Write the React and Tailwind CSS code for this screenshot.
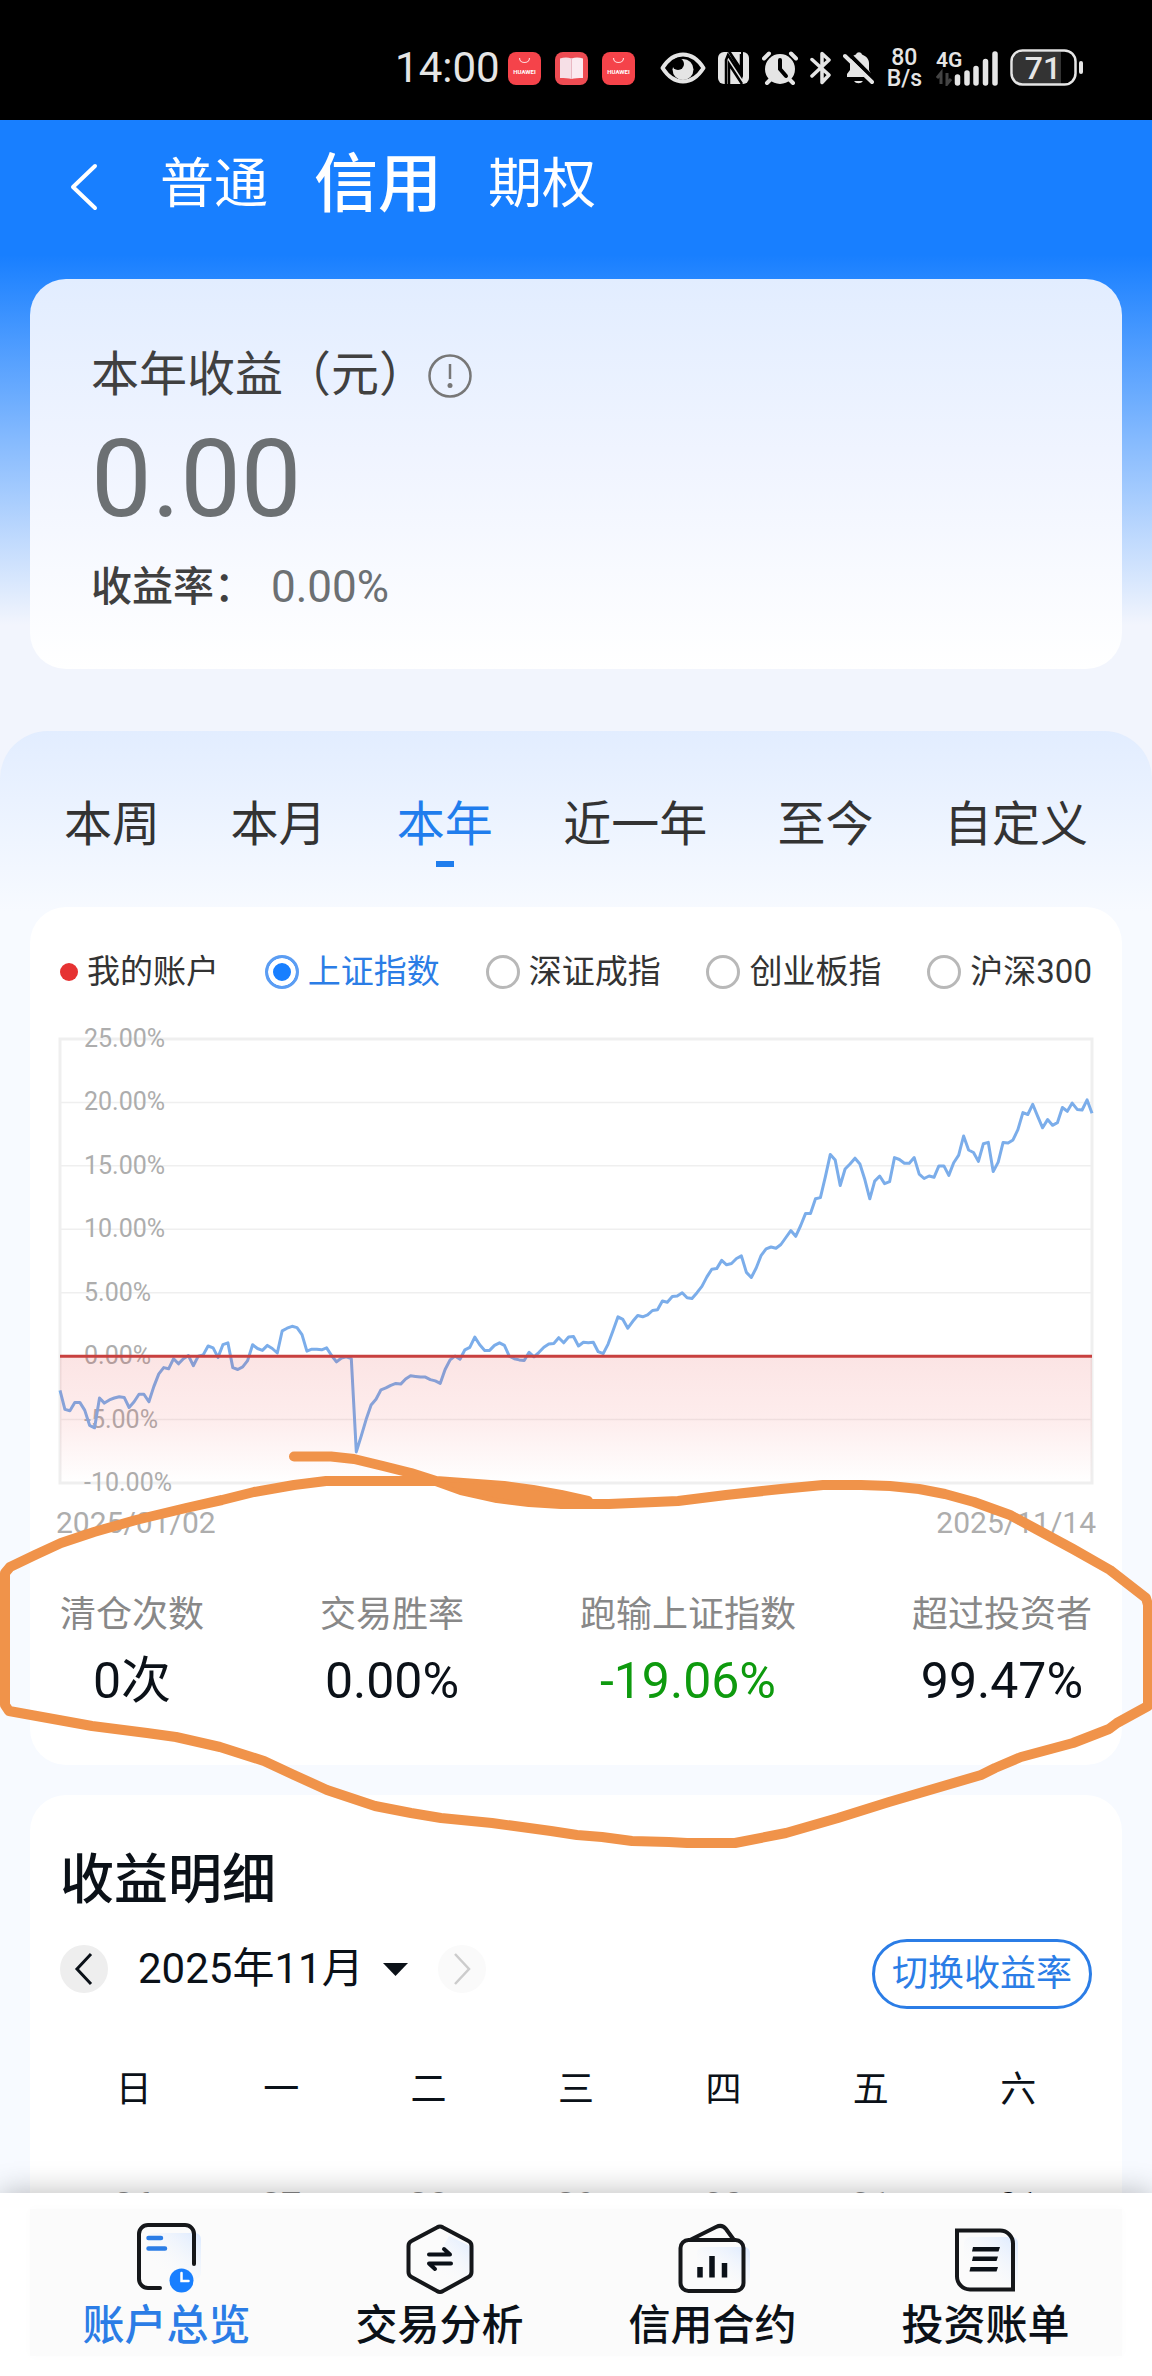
import React, { useState } from "react";

const periods = ["本周", "本月", "本年", "近一年", "至今", "自定义"];
const indexes = ["上证指数", "深证成指", "创业板指", "沪深300"];
const weekdays = ["日", "一", "二", "三", "四", "五", "六"];
const firstWeek = ["26", "27", "28", "29", "30", "31", "01"];

const stats = [
  { label: "清仓次数", value: "0次" },
  { label: "交易胜率", value: "0.00%" },
  { label: "跑输上证指数", value: "-19.06%", down: true },
  { label: "超过投资者", value: "99.47%" },
];

// daily change of the index since the first trading day, in percent
const indexSeries = [
  -2.7, -4.2, -4.3, -3.65, -3.65, -4.25, -5.45, -5.65, -3.3, -3.7, -3.45, -3.3, -3.2, -3.25, -4.05,
  -3.6, -3, -3, -3.6, -2.4, -1.4, -0.9, -1, -0.2, -0.6, -0.2, 0.05, -0.75, 0, 0.1, 0.8, 0.65, -0.1,
  0.9, 1.05, -0.9, -1.05, -0.85, -0.35, 0.9, 0.6, 0.45, 0.85, 0.6, 0.25, 2, 2.2, 2.35, 2.25, 1.7,
  0.4, 0.55, 0.55, 0.5, 0.65, 0.05, -0.45, -0.15, -0.05, -0.2, -7.55, -6.3, -5, -3.85, -3.4, -2.65,
  -2.5, -2.3, -2.15, -2.2, -1.8, -1.55, -1.6, -1.65, -1.65, -1.85, -1.95, -2.15, -1.05, -0.3, 0,
  -0.25, 0.5, 0.7, 1.5, 0.9, 0.45, 0.45, 0.85, 1.05, 0.85, 0, -0.2, -0.3, -0.35, 0.3, -0.05, 0.3,
  0.7, 0.95, 1, 1.45, 1.05, 1.5, 1.55, 0.8, 1.1, 1.05, 1.1, 0.35, 0.2, 0.95, 2, 3.1, 2.9, 2.2,
  2.75, 3.2, 3.1, 3.25, 3.6, 3.65, 4.35, 4.25, 4.7, 4.75, 5, 4.6, 4.55, 5, 5.5, 6.25, 6.85, 6.9,
  7.55, 7.2, 7.3, 7.7, 7.9, 6.6, 6.2, 6.95, 7.95, 8.45, 8.6, 8.5, 8.8, 9.35, 9.9, 9.45, 10.3,
  11.25, 11.25, 12.4, 12.5, 14.15, 15.9, 15.45, 13.45, 14.75, 15.15, 15.6, 15.15, 13.9, 12.4, 13.8,
  14.2, 13.6, 13.75, 15.65, 15.5, 15.2, 15.2, 15.65, 14.35, 14, 14.2, 14.1, 15, 15, 14.25, 15.25,
  15.85, 17.35, 16.25, 16.05, 15.35, 16.75, 16.85, 14.55, 15.3, 16.85, 16.8, 17.05, 17.85, 19.2,
  19.05, 19.85, 18.9, 18, 18.65, 18.2, 18.4, 19.6, 19.3, 19.95, 19.45, 19.4, 20.2, 19.15,
];

const CHART_W = 1032;
const CHART_H = 444;
const MAX = 25;
const MIN = -10;
const yOf = (v) => ((MAX - v) / (MAX - MIN)) * CHART_H;
const ticks = [25, 20, 15, 10, 5, 0, -5, -10];

const HuaweiIcon = () => (
  <svg width="33" height="33" viewBox="0 0 33 33" aria-hidden="true">
    <rect width="33" height="33" rx="8" fill="#f5434a" />
    <path d="M11.500 6c0 6 10 6 10 0" fill="none" stroke="#ffd9da" strokeWidth="1.200" />
    <text x="16.500" y="21.500" textAnchor="middle" fontSize="6" fontWeight="700" fill="#fff">
      HUAWEI
    </text>
  </svg>
);

const StatusBar = () => (
  <div className="flex h-[120px] shrink-0 items-center justify-end bg-black pt-4 pr-[68px] text-[#e5e5e5]">
    <span className="mr-2 text-[42px] leading-[48px]">14:00</span>
    <div className="mr-[25px] flex gap-[14px]">
      <HuaweiIcon />
      <svg width="33" height="33" viewBox="0 0 33 33" aria-hidden="true">
        <rect width="33" height="33" rx="8" fill="#ee4b52" />
        <path d="M5 6.500c4-1.500 8-1.500 11.500 0V27c-3-1-7-1-11.500-1z" fill="#f6dfe6" />
        <path d="M28 6.500c-4-1.500-8-1.500-11.500 0V27c3-1 7-1 11.500-1z" fill="#fbeaf0" />
        <path d="M16.500 6v21" stroke="#e9b7c2" />
      </svg>
      <HuaweiIcon />
    </div>
    <div className="flex items-center gap-3">
      <svg width="46" height="32" viewBox="0 0 46 32" aria-hidden="true">
        <path d="M2.500 16C14-2 32-2 43.500 16 32 34 14 34 2.500 16z" fill="none" stroke="#e5e5e5" strokeWidth="4" strokeLinejoin="round" />
        <circle cx="23" cy="17.500" r="10.500" fill="#e5e5e5" />
        <circle cx="18" cy="12" r="6" fill="#000" />
      </svg>
      <svg width="32" height="32" viewBox="0 0 32 32" aria-hidden="true">
        <rect width="31" height="32" rx="6" fill="#e5e5e5" />
        <path d="M8 32V8L10 3l13 20V2M24 32 11 12v20" fill="none" stroke="#000" strokeWidth="2.500" />
        <path d="M10 0l3 0 10 15V0h2v26z" fill="#000" />
      </svg>
      <svg width="36" height="34" viewBox="0 0 36 34" aria-hidden="true">
        <circle cx="18" cy="18" r="15" fill="#e5e5e5" />
        <path d="M2 7.500 7 2.500M34 7.500l-5-5M5 32l4-4M31 32l-4-4" stroke="#e5e5e5" strokeWidth="4" strokeLinecap="round" />
        <path d="M18 9v9l6 7" fill="none" stroke="#000" strokeWidth="4" strokeLinecap="round" />
      </svg>
      <svg width="21" height="34" viewBox="0 0 21 34" aria-hidden="true">
        <path d="M2 8.500 19 24l-7 7.500V2.500L19 9 2 25" fill="none" stroke="#e5e5e5" strokeWidth="3.500" strokeLinecap="round" strokeLinejoin="round" />
      </svg>
      <svg width="31" height="34" viewBox="0 0 31 34" aria-hidden="true">
        <path d="M4 26v-3l3-4v-7C7 6 11 4 13 3.500c1-3 5-3 6 0C23 5 26 8 26 12v7l2 4v3z" fill="#e5e5e5" />
        <path d="M11 30h9a5 4 0 0 1-9 0z" fill="#e5e5e5" />
        <path d="M4 1l27 27" stroke="#000" strokeWidth="4" />
        <path d="M2 5l27 26" stroke="#e5e5e5" strokeWidth="4" strokeLinecap="round" />
      </svg>
    </div>
    <div className="ml-[13px] text-center text-[23px] leading-[21px] font-medium">
      <div>80</div>
      <div>B/s</div>
    </div>
    <svg className="ml-[14px]" width="62" height="36" viewBox="0 0 62 36" aria-hidden="true">
      <text x="0" y="17" fontSize="21" fontWeight="600" fill="#e5e5e5">4G</text>
      <path d="M1 28l4-5v11M15 29l-4 5V23" fill="none" stroke="#444" strokeWidth="3" />
      <path d="M21.500 27v6M31 23v10M40 18.500V33M49.500 11.500V33M59 4v29" stroke="#e5e5e5" strokeWidth="5.500" strokeLinecap="round" />
    </svg>
    <svg className="ml-3" width="74" height="38" viewBox="0 0 74 38" aria-hidden="true">
      <path d="M12 3h39v32H12a9 9 0 0 1-9-9V12a9 9 0 0 1 9-9z" fill="#333" />
      <rect x="1.500" y="1.500" width="64" height="34" rx="11" fill="none" stroke="#e5e5e5" strokeWidth="2.500" />
      <path d="M71 14v9" stroke="#e5e5e5" strokeWidth="4" strokeLinecap="round" />
      <text x="33" y="30" textAnchor="middle" fontSize="32" fontWeight="500" fill="#e5e5e5">71</text>
    </svg>
  </div>
);

const IndexChart = () => {
  const step = CHART_W / (indexSeries.length - 1);
  const points = indexSeries.map((v, i) => `${(i * step).toFixed(1)},${yOf(v).toFixed(1)}`).join(" ");

  return (
    <svg viewBox={`0 0 ${CHART_W} ${CHART_H}`} className="block w-full overflow-visible" role="img" aria-label="收益走势">
      <defs>
        <linearGradient id="accountFill" x1="0" y1="0" x2="0" y2="1">
          <stop offset="0" stopColor="#e33030" stopOpacity="0.130" />
          <stop offset="0.500" stopColor="#f04848" stopOpacity="0.100" />
          <stop offset="1" stopColor="#f04848" stopOpacity="0" />
        </linearGradient>
      </defs>
      {ticks.slice(1, -1).map((t) => (
        <path key={t} d={`M0 ${yOf(t)}H${CHART_W}`} stroke="#efefef" strokeWidth="1.500" />
      ))}
      <rect width={CHART_W} height={CHART_H} fill="none" stroke="#efefef" strokeWidth="3" />
      {ticks.map((t) => (
        <text key={t} x="24" y={yOf(t) + 8} fontSize="25" fill="#adadad">
          {t.toFixed(2)}%
        </text>
      ))}
      <polyline points={points} fill="none" stroke="#7badea" strokeWidth="3" strokeLinejoin="round" />
      <rect y={yOf(0)} width={CHART_W} height={CHART_H - yOf(0)} fill="url(#accountFill)" />
      <path d={`M0 ${yOf(0)}H${CHART_W}`} stroke="#c8403f" strokeWidth="3" />
    </svg>
  );
};

// hand drawn ring around the stats row
const MarkerRing = () => (
  <svg viewBox="0 1440 1152 420" className="pointer-events-none absolute inset-x-0 top-[1320px] w-full" aria-hidden="true">
    <g fill="none" stroke="#f0934a" strokeWidth="10" strokeLinejoin="round" strokeLinecap="round">
      <path d="M294 1456.500H331L354 1459 383 1466 411 1473 436 1481 461 1490 497 1498 529 1502 561 1504H609L678 1501 726 1495 781 1489 823 1485H861L890 1486 919 1489 945 1494 974 1502 1010 1515 1036 1529 1073 1549 1110 1570 1146 1598 1148 1605V1706L1117 1723 1109 1729 1073 1743 1021 1757 995 1768 981 1775 889 1802 838 1818 786 1833 735 1843H687L669 1842 632 1841 602 1837 577 1835 551 1831 492 1823 441 1818 411 1813 375 1806 327 1790 294 1775 264 1761 220 1747 176 1737 147 1733 92 1726 9 1711 5 1705V1573L10 1567 35 1555 61 1543 94 1532 136 1520 186 1508 222 1500 254 1492 294 1485 326 1481H436L504 1486 533 1490 561 1495 588 1501" />
    </g>
    <path d="M436 1481L504 1486 533 1490 561 1495 588 1501 561 1504 529 1502 497 1498 461 1490z" fill="#f0934a" />
  </svg>
);

const navItems = [
  {
    label: "账户总览",
    icon: (
      <>
        <rect x="16" y="11" width="54" height="46" rx="6" fill="url(#navTint)" />
        <path d="M63 42V12a9 9 0 0 0-9-9H17a9 9 0 0 0-9 9v45a9 9 0 0 0 9 9h12" fill="none" stroke="#15171a" strokeWidth="4" strokeLinecap="round" />
        <path d="M17.500 16H30M17.500 26.500H34" stroke="#2b7de6" strokeWidth="4.500" strokeLinecap="round" />
        <circle cx="50.500" cy="58.500" r="12" fill="#187fff" />
        <path d="M50.500 51v8h7" fill="none" stroke="#fff" strokeWidth="2.500" strokeLinecap="round" />
      </>
    ),
  },
  {
    label: "交易分析",
    icon: (
      <>
        <path d="M45 14l25 12v32H20z" fill="url(#navTint)" />
        <path d="M33 5.500q3-2 6 0L64.500 19q3 1.500 3 5v26q0 3.500-3 5L39 69q-3 2-6 0L7.500 55q-3-1.500-3-5V24q0-3.500 3-5z" fill="none" stroke="#15171a" strokeWidth="4" strokeLinejoin="round" />
        <path d="M25 32.500h21l-6-5.500M47 41.500H25l6 5.500" fill="none" stroke="#0b1118" strokeWidth="4" strokeLinecap="round" strokeLinejoin="round" />
      </>
    ),
  },
  {
    label: "信用合约",
    icon: (
      <>
        <rect x="20" y="25" width="53" height="36" rx="6" fill="url(#navTint)" />
        <rect x="3.500" y="18" width="63" height="51" rx="8" fill="none" stroke="#15171a" strokeWidth="4" />
        <path d="M13 18L39 5q6-3 10 2l8 11" fill="none" stroke="#15171a" strokeWidth="4" />
        <path d="M23 45v10.500M35 34v21.500M47.500 41v14.500" stroke="#0b1118" strokeWidth="5.500" />
      </>
    ),
  },
  {
    label: "投资账单",
    icon: (
      <>
        <rect x="14" y="15" width="54" height="48" rx="6" fill="url(#navTint)" />
        <path d="M7 8.500h43a13 13 0 0 1 13 13v46H20a13 13 0 0 1-13-13z" fill="none" stroke="#15171a" strokeWidth="4" />
        <path d="M23 25h27l-1.500 4.500H22zM23 34.500h25L46.500 39H22zM20.500 45h27.500l-1.500 4.500H19.500z" fill="#0b1118" />
      </>
    ),
  },
];

const BottomNav = () => (
  <nav className="relative shrink-0 bg-white px-[30px] pt-4 pb-5 shadow-[0_0_28px_rgba(0,0,0,0.280)]">
    <div className="grid grid-cols-4 bg-[#fbfbfb] pt-[13px] pb-1.5 shadow-[0_0_10px_#fbfbfb]">
      {navItems.map((item, i) => (
        <a
          key={item.label}
          href="#"
          className={`flex flex-col items-center gap-2 text-[42px] leading-[48px] font-medium ${
            i === 0 ? "text-[#2b7de6]" : "text-[#0b1118]"
          }`}
        >
          <svg width="72" height="72" viewBox="0 0 72 72" className="overflow-visible" aria-hidden="true">
            <defs>
              <linearGradient id="navTint" x1="1" y1="0" x2="0.200" y2="0.800">
                <stop offset="0" stopColor="#dbe9ff" />
                <stop offset="1" stopColor="#fbfbfb" stopOpacity="0" />
              </linearGradient>
            </defs>
            {item.icon}
          </svg>
          {item.label}
        </a>
      ))}
    </div>
  </nav>
);

const App = () => {
  const [period, setPeriod] = useState("本年");
  const [index, setIndex] = useState("上证指数");

  return (
    <div className="flex h-screen flex-col overflow-hidden bg-[#f2f5fd] font-['Roboto','Noto_Sans_CJK_SC',sans-serif]">
      <StatusBar />

      <main className="relative min-h-0 flex-1 overflow-hidden bg-[linear-gradient(to_bottom,#187fff_0,#187fff_135px,#f2f5fd_505px)]">
        <header className="mb-[29px] flex h-[130px] items-center pl-[70px] text-white">
          <button type="button" aria-label="返回" className="mr-[60px] pt-1">
            <svg width="30" height="48" viewBox="0 0 30 48">
              <path d="M25 3L3 24l22 21" fill="none" stroke="#fff" strokeWidth="4" strokeLinecap="round" strokeLinejoin="round" />
            </svg>
          </button>
          <div className="flex items-center gap-[46px] leading-[72px]">
            <button type="button" className="text-[54px]">普通</button>
            <button type="button" className="text-[64px] font-medium">信用</button>
            <button type="button" className="text-[54px]">期权</button>
          </div>
        </header>

        <section className="mx-[30px] rounded-[36px] bg-linear-to-b from-[#e2edff] via-[#f1f5ff] to-white px-[61px] pt-[68px] pb-[58px]">
          <div className="flex items-center text-[48px] leading-[56px] text-[#404040]">
            本年收益（元）
            <button type="button" aria-label="收益说明">
              <svg width="46" height="46" viewBox="0 0 46 46">
                <circle cx="23" cy="24" r="20.500" fill="none" stroke="#777" strokeWidth="2.500" />
                <path d="M23 12v15" stroke="#777" strokeWidth="2.500" />
                <circle cx="23" cy="33.500" r="2.500" fill="#777" />
              </svg>
            </button>
          </div>
          <div className="mt-4 text-[108px] leading-[120px] text-[#6c7073]">0.00</div>
          <div className="mt-6 flex gap-4 leading-[48px]">
            <span className="text-[41px] font-medium text-[#404040]">收益率：</span>
            <span className="text-[44px] text-[#6c7073]">0.00%</span>
          </div>
        </section>

        <div className="mt-[62px] rounded-t-[48px] bg-[#f7faff] bg-[linear-gradient(to_bottom,#e2edff_0,#f7faff_180px)] px-[30px] pt-[66px]">
          <div className="mb-10 flex justify-between px-[34px]">
            {periods.map((p) => (
              <button
                key={p}
                type="button"
                onClick={() => setPeriod(p)}
                className={`flex flex-col items-center gap-2 text-[48px] leading-[56px] ${
                  p === period ? "text-[#1f7ded]" : "text-[#333333]"
                }`}
              >
                {p}
                <span className={`h-1.5 w-[18px] ${p === period ? "bg-[#1f7ded]" : "bg-transparent"}`} />
              </button>
            ))}
          </div>

          <section className="rounded-[36px] bg-white px-[30px] pt-11 pb-[54px]">
            <div className="flex items-center justify-between text-[33px] leading-[42px] text-[#333333]">
              <span className="flex items-center gap-[9px]">
                <span className="size-[18px] rounded-full bg-[#e63232]" />
                我的账户
              </span>
              {indexes.map((name) => (
                <label key={name} className={`flex items-center gap-[9px] ${name === index ? "text-[#2b7de6]" : ""}`}>
                  <input
                    type="radio"
                    name="index"
                    checked={name === index}
                    onChange={() => setIndex(name)}
                    className="size-[34px] appearance-none rounded-full border-[3px] border-[#b8b8b8] checked:border-[#5b9df3] checked:bg-[#187fff] checked:shadow-[inset_0_0_0_5px_#fff]"
                  />
                  {name}
                </label>
              ))}
            </div>

            <div className="mt-[46px]">
              <IndexChart />
            </div>
            <div className="-mx-1 mt-5 flex justify-between text-[30px] leading-[40px] text-[#adadad]">
              <span>2025/01/02</span>
              <span>2025/11/14</span>
            </div>

            <dl className="mt-12 flex justify-between">
              {stats.map((s) => (
                <div key={s.label} className="text-center">
                  <dt className="text-[36px] leading-[48px] text-[#888888]">{s.label}</dt>
                  <dd className={`mt-3 text-[50px] leading-[60px] ${s.down ? "text-[#0e9a0e]" : "text-[#0b1118]"}`}>
                    {s.value}
                  </dd>
                </div>
              ))}
            </dl>
          </section>

          <section className="mt-[30px] rounded-t-[36px] bg-white px-[30px] pt-[54px] pb-40 text-[#0b1118]">
            <h2 className="text-[54px] leading-[64px] font-medium">收益明细</h2>
            <div className="mt-[26px] flex items-start justify-between">
              <div className="flex h-15 items-center">
                <button type="button" aria-label="上个月" className="flex size-12 items-center justify-center rounded-full bg-[#eeeeee]">
                  <svg width="20" height="34" viewBox="0 0 20 34">
                    <path d="M17 2L3 17l14 15" fill="none" stroke="#0b1118" strokeWidth="3" />
                  </svg>
                </button>
                <div className="relative mr-7 ml-[30px]">
                  <select aria-label="月份" className="block appearance-none bg-transparent pr-[46px] text-[42px] leading-[56px]">
                    <option>2025年11月</option>
                  </select>
                  <svg className="pointer-events-none absolute top-[22px] right-0.5" width="25" height="13" viewBox="0 0 25 13">
                    <path d="M0 0h25L12.500 13z" fill="#0b1118" />
                  </svg>
                </div>
                <button type="button" aria-label="下个月" disabled className="flex size-12 items-center justify-center rounded-full bg-[#fafafa]">
                  <svg width="20" height="34" viewBox="0 0 20 34">
                    <path d="M3 2l14 15L3 32" fill="none" stroke="#cccccc" strokeWidth="2.500" />
                  </svg>
                </button>
              </div>
              <button type="button" className="rounded-full border-[3px] border-[#2b7de6] px-[17px] py-1.5 text-[36px] leading-[52px] text-[#2b7de6]">
                切换收益率
              </button>
            </div>

            <table className="mt-[57px] w-full table-fixed text-center text-[36px] leading-[48px]">
              <thead>
                <tr>
                  {weekdays.map((d) => (
                    <th key={d} scope="col" className="p-0 pb-[68px] font-normal">{d}</th>
                  ))}
                </tr>
              </thead>
              <tbody>
                <tr>
                  {firstWeek.map((d, i) => (
                    <td key={d} className={`p-0 ${i < 6 ? "text-[#888888]" : ""}`}>{d}</td>
                  ))}
                </tr>
              </tbody>
            </table>
          </section>
        </div>

        <MarkerRing />
      </main>

      <BottomNav />
    </div>
  );
};

export default App;
